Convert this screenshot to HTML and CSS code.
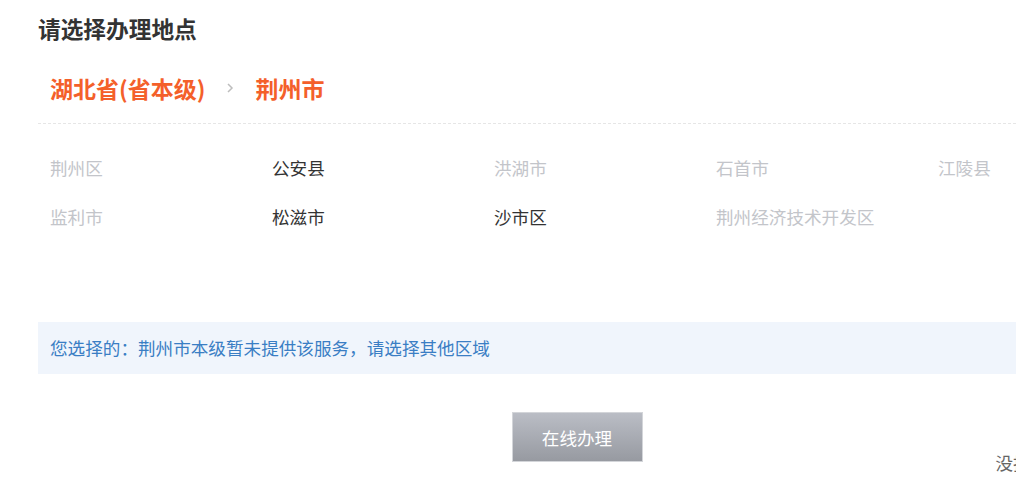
FILE: index.html
```html
<!DOCTYPE html>
<html lang="zh-CN">
<head>
<meta charset="utf-8">
<title>请选择办理地点</title>
<link rel="stylesheet" href="styles.css">
</head>
<body>
<div class="page">
  <h1 class="title">请选择办理地点</h1>
  <div class="crumbs">
    <span class="crumb">湖北省(省本级)</span>
    <svg class="chev" width="8" height="12" viewBox="0 0 8 12"><path d="M2 2 L6 6 L2 10" fill="none" stroke="#bdbdbd" stroke-width="1.5"/></svg>
    <span class="crumb">荆州市</span>
  </div>
  <div class="areas">
    <span class="area off">荆州区</span>
    <span class="area on">公安县</span>
    <span class="area off">洪湖市</span>
    <span class="area off">石首市</span>
    <span class="area off">江陵县</span>
    <span class="area off">监利市</span>
    <span class="area on">松滋市</span>
    <span class="area on">沙市区</span>
    <span class="area off">荆州经济技术开发区</span>
  </div>
  <div class="notice">您选择的：荆州市本级暂未提供该服务，请选择其他区域</div>
  <div class="actions">
    <button class="btn" type="button">在线办理</button>
    <span class="note">没找到办理地点？</span>
  </div>
</div>
</body>
</html>
```

FILE: styles.css
```css
html, body {
  margin: 0;
  padding: 0;
  overflow: hidden;
  background: #fff;
}
body {
  font-family: "Noto Sans CJK SC", "Noto Sans", sans-serif;
  color: #333;
}
.page {
  width: 1078px;
  padding: 14px 0 40px 38px;
}
.title {
  margin: 0;
  font-size: 22.7px;
  line-height: 30px;
  font-weight: 700;
  color: #333;
}
.crumbs {
  display: flex;
  align-items: center;
  gap: 21px;
  margin-top: 29px;
  padding: 0 12px 20px;
  border-bottom: 1px dashed #e6e6e6;
}
.crumb {
  font-size: 23px;
  line-height: 30px;
  font-weight: 700;
  color: #f4602a;
}
.chev {
  display: block;
}
.areas {
  display: grid;
  grid-template-columns: repeat(5, 222px);
  padding: 19px 12px 0;
}
.area {
  font-size: 17.6px;
  line-height: 49px;
}
.area.off { color: #c3c5ca; }
.area.on { color: #333; }
.notice {
  margin-top: 81px;
  height: 52px;
  line-height: 52px;
  padding-left: 12px;
  background: #f0f5fc;
  color: #3a7ec4;
  font-size: 17.6px;
}
.actions {
  display: grid;
  grid-template-columns: minmax(0, 1fr) auto minmax(0, 1fr);
  margin-top: 38px;
}
.btn {
  grid-column: 2;
  width: 131px;
  height: 50px;
  border: 1px solid #d3d5d9;
  background: linear-gradient(#babdc5, #979aa1);
  color: #fff;
  font-family: inherit;
  font-size: 17.6px;
  padding: 0;
}
.note {
  grid-column: 3;
  align-self: end;
  justify-self: start;
  margin: 0 0 -13px 353px;
  font-size: 17.6px;
  line-height: 24px;
  color: #666;
  white-space: nowrap;
}
```
